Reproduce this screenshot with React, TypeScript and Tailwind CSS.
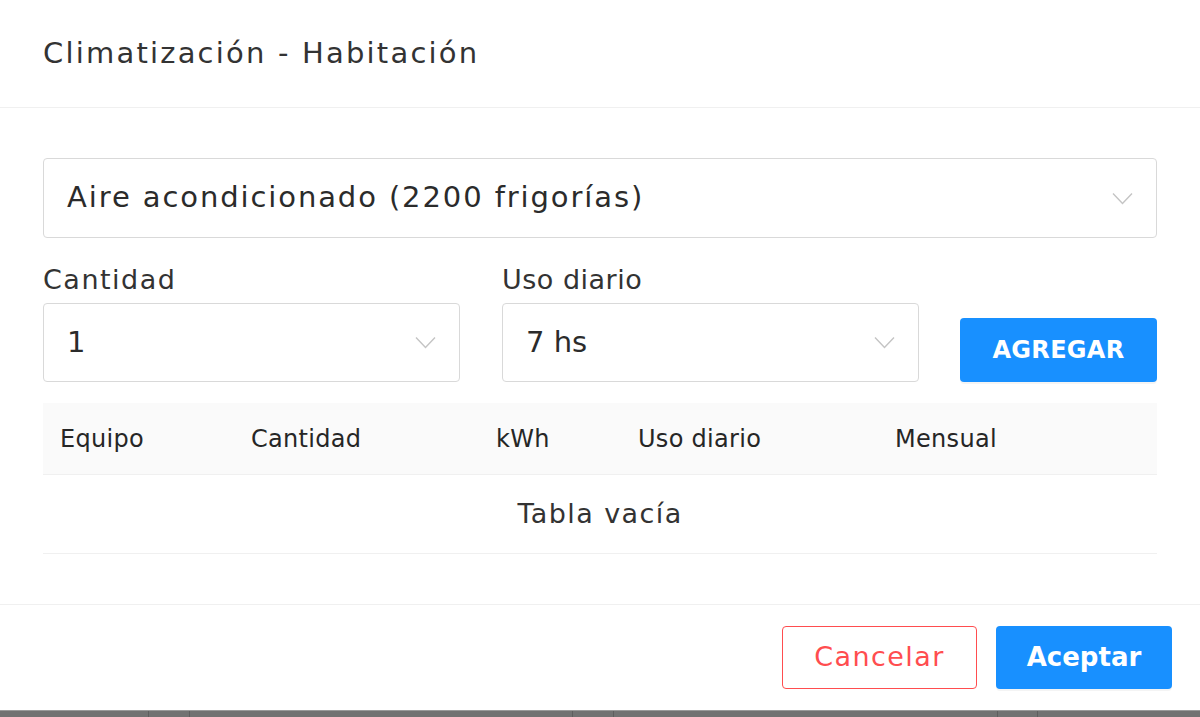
import React from "react";

function Chevron() {
  return (
    <svg width="21" height="13" viewBox="0 0 21 13" fill="none" className="shrink-0">
      <polyline points="1,1.5 10.5,11.5 20,1.5" stroke="#c4c4c4" strokeWidth="1.4" fill="none" />
    </svg>
  );
}

function Select({ value, className }: { value: string; className: string }) {
  return (
    <div
      className={`flex items-center justify-between border-[1.5px] border-[#d9d9d9] rounded-[4px] bg-white pl-[23px] pr-[23px] ${className}`}
    >
      <span className="text-[#2b2b2b]">{value}</span>
      <Chevron />
    </div>
  );
}

export default function App() {
  const cols = ["Equipo", "Cantidad", "kWh", "Uso diario", "Mensual"];
  return (
    <div className="w-[1200px] h-[717px] bg-white flex flex-col overflow-hidden font-['DejaVu_Sans','Noto_Sans',sans-serif] text-[#2b2b2b]">
      <div className="h-[108px] shrink-0 flex items-center px-[43px] border-b-[1.5px] border-[#f0f0f0]">
        <span className="text-[29px] tracking-[2.2px] text-[#333333] pt-[1px]">Climatización - Habitación</span>
      </div>

      <div className="px-[43px] pt-[50px] pb-[50px] flex flex-col border-b-[1.5px] border-[#f0f0f0]">
        <Select value="Aire acondicionado (2200 frigorías)" className="h-[80px] text-[29px] tracking-[1.9px]" />

        <div className="flex items-end mt-[27px]">
          <div className="w-[417px] flex flex-col">
            <span className="text-[27px] tracking-[1.5px] leading-[30px] mb-[8px] text-[#333333]">Cantidad</span>
            <Select value="1" className="h-[79px] text-[29px]" />
          </div>
          <div className="w-[417px] ml-[42px] flex flex-col">
            <span className="text-[27px] tracking-[0.5px] leading-[30px] mb-[8px] text-[#333333]">Uso diario</span>
            <Select value="7 hs" className="h-[79px] text-[29px]" />
          </div>
          <div className="ml-[41px] flex-1 flex">
            <button className="w-full h-[64px] bg-[#1890ff] rounded-[4px] text-white font-bold text-[24px] tracking-[0.3px] shadow-[0_2px_0_rgba(0,0,0,0.045)]">
              AGREGAR
            </button>
          </div>
        </div>

        <div className="mt-[21px] flex flex-col">
          <div className="grid grid-cols-[191px_245px_142px_257px_1fr] h-[72px] bg-[#fafafa] border-b-[1.5px] border-[#f0f0f0] items-center">
            {cols.map((c) => (
              <div key={c} className="pl-[17px] text-[24px] tracking-[0.3px] text-[#262626]">
                {c}
              </div>
            ))}
          </div>
          <div className="h-[79px] flex items-center justify-center border-b-[1.5px] border-[#f0f0f0] text-[27px] tracking-[1.4px] text-[#333333]">
            Tabla vacía
          </div>
        </div>
      </div>

      <div className="flex-1 flex justify-end items-start pt-[21px] pr-[28px]">
        <button className="w-[195px] h-[63px] border-[1.5px] border-[#ff4d4f] rounded-[4px] text-[#ff4d4f] text-[27px] tracking-[1.4px] bg-white">
          Cancelar
        </button>
        <button className="ml-[19px] w-[176px] h-[63px] bg-[#1890ff] rounded-[4px] text-white text-[26px] font-bold shadow-[0_2px_0_rgba(0,0,0,0.045)]">
          Aceptar
        </button>
      </div>

      <div className="h-[7px] shrink-0 flex bg-[#727272] border-t border-[#9a9a9a]">
        <div className="w-[149px] border-r border-[#5e5e5e]" />
        <div className="w-[41px] border-r border-[#5e5e5e]" />
        <div className="w-[383px] border-r border-[#5e5e5e]" />
        <div className="w-[41px] border-r border-[#5e5e5e]" />
        <div className="w-[384px] border-r border-[#5e5e5e]" />
        <div className="w-[40px] border-r border-[#5e5e5e]" />
        <div className="flex-1" />
      </div>
    </div>
  );
}
